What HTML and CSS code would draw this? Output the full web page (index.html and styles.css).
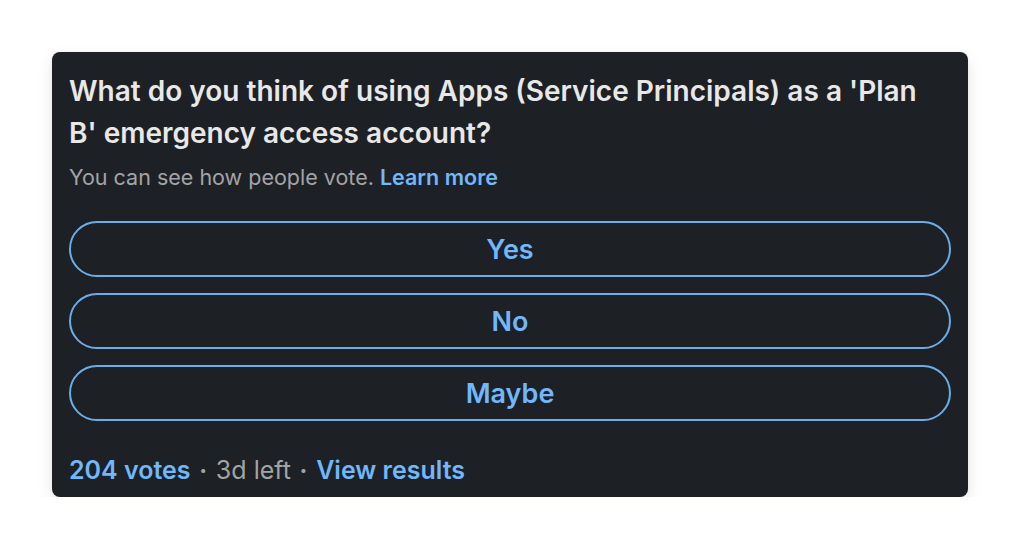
FILE: index.html
```html
<!DOCTYPE html>
<html>
<head>
<meta charset="utf-8">
<link rel="stylesheet" href="styles.css">
</head>
<body>
<div class="page">
  <div class="card">
    <h2 class="question">What do you think of using Apps (Service Principals) as a 'Plan B' emergency access account?</h2>
    <p class="note">You can see how people vote. <a class="link" href="#">Learn more</a></p>
    <div class="options">
      <button class="option">Yes</button>
      <button class="option">No</button>
      <button class="option">Maybe</button>
    </div>
    <div class="footer">
      <a class="link" href="#">204 votes</a>
      <span class="dot">•</span>
      <span class="muted">3d left</span>
      <span class="dot">•</span>
      <a class="link" href="#">View results</a>
    </div>
  </div>
</div>
</body>
</html>
```
FILE: styles.css
```css
* { box-sizing: border-box; }
html, body { margin: 0; padding: 0; background: #ffffff; }
body { font-family: Inter, "Noto Sans", sans-serif; }
.page { padding: 52px 52px 0 52px; }
.card {
  width: 916px;
  height: 445px;
  background: #1d2025;
  border-radius: 8px;
  box-shadow: 0 6px 16px rgba(0,0,0,0.10), 0 0 2px rgba(0,0,0,0.08);
  padding: 18px 17px 0 17px;
  display: flex;
  flex-direction: column;
}
.question {
  margin: 0;
  max-width: 866px;
  font-size: 28px;
  line-height: 42px;
  font-weight: 600;
  color: #e8e8e8;
}
.note {
  margin: 9px 0 0 0;
  font-size: 21.5px;
  line-height: 28px;
  color: #a3a4a6;
}
.link {
  color: #71b7fb;
  font-weight: 600;
  text-decoration: none;
}
.options {
  margin-top: 30px;
  display: flex;
  flex-direction: column;
  gap: 16px;
}
.option {
  height: 56px;
  width: 100%;
  border: 2px solid #6aaee9;
  border-radius: 28px;
  background: transparent;
  color: #71b7fb;
  font-family: inherit;
  font-size: 27px;
  font-weight: 600;
  padding: 0;
}
.footer {
  margin-top: 34px;
  font-size: 25px;
  line-height: 30px;
  display: flex;
  align-items: center;
  gap: 9px;
}
.muted { color: #a3a4a6; }
.dot { color: #a3a4a6; font-size: 13px; }
```
